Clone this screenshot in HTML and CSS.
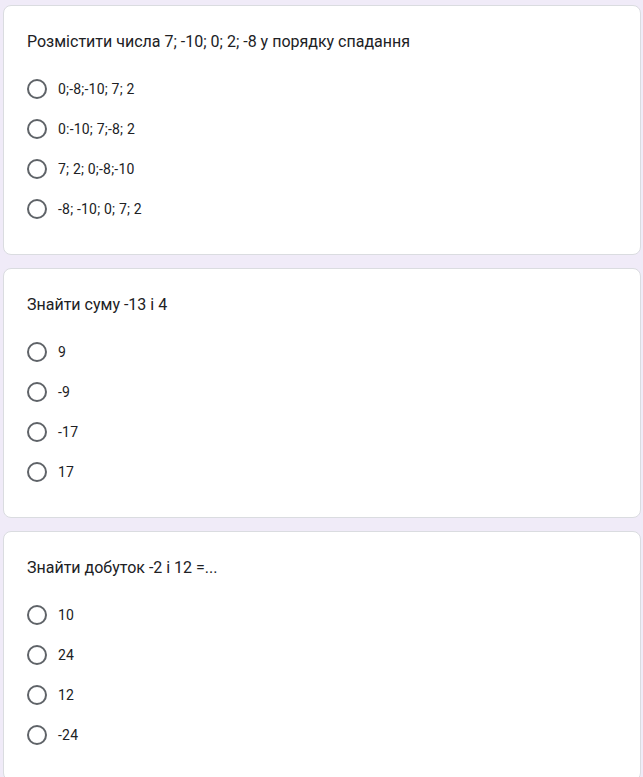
FILE: index.html
```html
<!DOCTYPE html>
<html lang="uk">
<head>
    <meta charset="UTF-8">
    <meta name="viewport" content="width=device-width, initial-scale=1.0">
    <title>Тест</title>
    <link rel="stylesheet" href="styles.css">
</head>
<body>

<div class="form-list">
    <div class="question-card">
        <div class="question-title">Розмістити числа 7; -10; 0; 2; -8 у порядку спадання</div>
        <div class="options">
            <label class="option"><span class="radio"></span>0;-8;-10; 7; 2</label>
            <label class="option"><span class="radio"></span>0:-10; 7;-8; 2</label>
            <label class="option"><span class="radio"></span>7; 2; 0;-8;-10</label>
            <label class="option"><span class="radio"></span>-8; -10; 0; 7; 2</label>
        </div>
    </div>

    <div class="question-card">
        <div class="question-title">Знайти суму -13 і 4</div>
        <div class="options">
            <label class="option"><span class="radio"></span>9</label>
            <label class="option"><span class="radio"></span>-9</label>
            <label class="option"><span class="radio"></span>-17</label>
            <label class="option"><span class="radio"></span>17</label>
        </div>
    </div>

    <div class="question-card">
        <div class="question-title">Знайти добуток -2 і 12 =...</div>
        <div class="options">
            <label class="option"><span class="radio"></span>10</label>
            <label class="option"><span class="radio"></span>24</label>
            <label class="option"><span class="radio"></span>12</label>
            <label class="option"><span class="radio"></span>-24</label>
        </div>
    </div>
</div>

</body>
</html>
```

FILE: styles.css
```css
body {
    margin: 0;
    padding: 0;
    background-color: #f0ebf8;
    font-family: 'Roboto', 'Liberation Sans', sans-serif;
    color: #202124;
}

.form-list {
    display: flex;
    flex-direction: column;
    gap: 13px;
    padding: 5px 2px 0 3px;
}

.question-card {
    background-color: #fff;
    border: 1px solid #dadce0;
    border-radius: 8px;
    padding: 24px 24px 25px 23px;
}

.question-title {
    font-size: 16px;
    line-height: 24px;
}

.options {
    margin-top: 15px;
    display: flex;
    flex-direction: column;
}

.option {
    display: flex;
    align-items: center;
    height: 40px;
    font-size: 14px;
    letter-spacing: 0.2px;
    cursor: pointer;
}

.radio {
    width: 16px;
    height: 16px;
    border: 2px solid #5f6368;
    border-radius: 50%;
    margin-right: 11px;
    flex-shrink: 0;
}
```
